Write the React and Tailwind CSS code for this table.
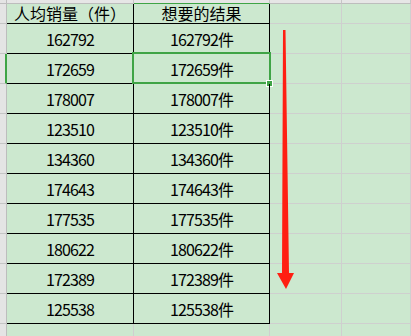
const rows = [
  "162792",
  "172659",
  "178007",
  "123510",
  "134360",
  "174643",
  "177535",
  "180622",
  "172389",
  "125538",
]

const font = { fontFamily: '"Noto Sans CJK SC", "Noto Sans", sans-serif' }

function ColHeader() {
  const cols = [
    { key: "A", w: "w-[127px]", line: "border-b-[#bdbdbd]" },
    { key: "B", w: "w-[136px]", line: "border-b-[#3fa446]" },
    { key: "C", w: "w-[72px]", line: "border-b-[#bdbdbd]" },
    { key: "D", w: "flex-1", line: "border-b-[#bdbdbd]" },
  ]
  return (
    <div className="flex h-[4px] shrink-0">
      <div className="w-[7px] h-full bg-[#e4e4e4] border-r border-b border-[#bdbdbd]" />
      {cols.map((c) => (
        <div
          key={c.key}
          className={`${c.w} h-full overflow-hidden bg-[#e6e6e6] border-r border-[#c6c6c6] border-b ${c.line}`}
        >
          <div className="h-[16px] -mt-[13px] flex items-center justify-center text-[12px] text-[#666]">
            {c.key}
          </div>
        </div>
      ))}
    </div>
  )
}

function Row({ a, b, head, selected, tall = 30, last }) {
  const black = last ? "border-[#cfcfcf]" : "border-black"
  return (
    <div className="flex shrink-0" style={{ height: tall }}>
      <div
        className={`w-[7px] h-full bg-[#e4e4e4] border-b border-[#c4c4c4] ${
          selected ? "border-r-2 border-r-[#3fa446]" : "border-r border-r-[#bdbdbd]"
        }`}
      />
      <div
        className={`w-[127px] h-full border-r border-b ${black} flex justify-center ${
          head ? "items-end pb-[1px] leading-[17px] text-[16px]" : "items-center text-[16px] tracking-[-0.9px]"
        }`}
      >
        {a}
      </div>
      <div
        className={`relative w-[136px] h-full border-r border-b ${black} flex justify-center ${
          head ? "items-end pb-[1px] leading-[17px] text-[16px]" : "items-center text-[16px] tracking-[-0.9px]"
        }`}
      >
        {b}
        {selected && (
          <>
            <div className="absolute -left-[2px] -top-[2px] -right-[2px] -bottom-[1px] border-2 border-[#3fa446]" />
            <div className="absolute -right-[4px] -bottom-[4px] w-[7px] h-[7px] bg-[#3fa446] border border-white" />
          </>
        )}
      </div>
      <div className="w-[72px] h-full border-r border-b border-[#cfcfcf]" />
      <div className="flex-1 h-full border-r border-b border-[#cfcfcf]" />
    </div>
  )
}

export default function App() {
  return (
    <div
      className="relative w-[411px] h-[336px] overflow-hidden bg-[#cce8cf] text-black flex flex-col"
      style={font}
    >
      <ColHeader />
      <Row head tall={20} a="人均销量（件）" b="想要的结果" />
      {rows.map((n, i) => (
        <Row key={n} a={n} b={`${n}件`} selected={i === 1} />
      ))}
      <Row last a="" b="" />

      {/* red arrow drawn over the sheet */}
      <svg className="absolute left-0 top-0 pointer-events-none" width="411" height="336">
        <polygon
          points="283,30 285.5,30 289,273 294,273 286,289 277,273 282,273"
          fill="#ff1f12"
        />
      </svg>
    </div>
  )
}
